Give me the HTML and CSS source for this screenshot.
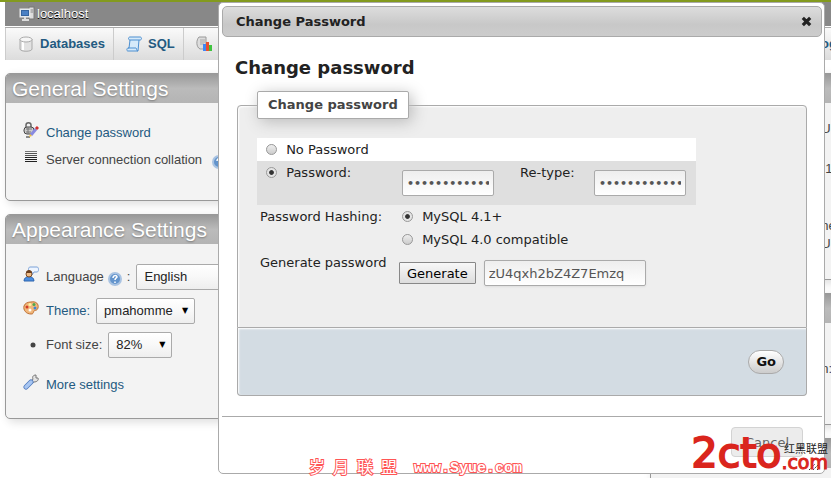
FILE: index.html
```html
<!DOCTYPE html>
<html lang="en">
<head>
    <meta charset="UTF-8">
    <title>localhost | phpMyAdmin</title>
    <link rel="stylesheet" href="styles.css">
</head>
<body>

    <div class="page">
        <header class="serverinfo">
            <svg class="icon" viewBox="0 0 16 16">
                <rect x="10" y="1" width="5" height="12" fill="#ddd" stroke="#777"/>
                <path d="M11 4h3M11 6h3" stroke="#888"/>
                <rect x="1" y="3" width="10" height="8" fill="#dce6f2" stroke="#e8e8e8"/>
                <rect x="2.500" y="4.500" width="7" height="5" fill="#4a80c4" stroke="#35649f"/>
                <path d="M6 11v2M3 14h7" stroke="#ddd" stroke-width="2"/>
            </svg>
            <a href="#">localhost</a>
        </header>

        <nav class="tabs">
            <a href="#" class="tab">
                <svg class="icon" viewBox="0 0 16 16">
                    <path d="M2 3v10c0 3 12 3 12 0V3" fill="#e2e2e2" stroke="#aaa"/>
                    <path d="M5 5v9" stroke="#fff" stroke-width="2"/>
                    <ellipse cx="8" cy="3.500" rx="6" ry="2.500" fill="#f6f6f6" stroke="#aaa"/>
                </svg>
                Databases
            </a>
            <a href="#" class="tab">
                <svg class="icon" viewBox="0 0 16 16">
                    <path d="M4 1h10c2 0 2 3 0 3h-1l-1 11H2c-2 0-1-3 0-3h1L4 4C2 4 2 1 4 1z" fill="#d6eafa" stroke="#4d8fd0"/>
                    <path d="M4 4h9M2 12h8c1 0 0 3 2 3" fill="none" stroke="#4d8fd0"/>
                </svg>
                SQL
            </a>
            <a href="#" class="tab">
                <svg class="icon" viewBox="0 0 16 16">
                    <path d="M3 1h7v12H4c-4-2-4-9-1-12z" fill="#ddd" stroke="#999"/>
                    <path d="M4 4h5M4 6h5M4 8h4" stroke="#aaa"/>
                    <path d="M7 8h3v7H7z" fill="#3f87f5"/>
                    <path d="M10 6h3v9h-3z" fill="#e8502f"/>
                    <path d="M13 9h3v6h-3z" fill="#3fc43f"/>
                </svg>
            </a>
            <a href="#" class="tab tab-last">og</a>
        </nav>

        <main class="columns">
            <div class="column">
                <section class="group">
                    <h2>General Settings</h2>
                    <ul class="general">
                        <li>
                            <svg class="icon" viewBox="0 0 16 16">
                                <path d="M3 5V3c0-3 5-3 5 0v2" fill="none" stroke="#666" stroke-width="1.500"/>
                                <rect x="1" y="5" width="10" height="7" rx="3" fill="#ccc" stroke="#444"/>
                                <path d="M3 7h6M3 10h5M5 5v7" stroke="#777"/>
                                <path d="M3 15h4" stroke="#222"/>
                                <path d="M8 13l5-6" stroke="#8a8be0" stroke-width="3"/>
                                <path d="M13 7l2-2" stroke="#d03030" stroke-width="3"/>
                                <path d="M6 15l1-3 2 2z" fill="#efc040"/>
                            </svg>
                            <a href="#">Change password</a>
                        </li>
                        <li>
                            <svg class="icon" viewBox="0 0 16 16">
                                <path d="M2 2.500h12" stroke="#777"/>
                                <path d="M2 4.500h12M2 6.500h12" stroke="#555"/>
                                <path d="M2 8.500h12M2 10.500h12M2 12.500h12" stroke="#222"/>
                            </svg>
                            Server connection collation
                            <svg class="icon help help-far" viewBox="0 0 16 16">
                                <circle cx="8" cy="8" r="6" fill="#6394cc" stroke="#a9c3e2" stroke-width="2"/>
                                <path d="M6 7c0-3 4-3 4-1 0 1-2 1-2 3M8 10.500v1.500" fill="none" stroke="#fff" stroke-width="1.500"/>
                            </svg>
                        </li>
                    </ul>
                </section>

                <section class="group">
                    <h2>Appearance Settings</h2>
                    <ul class="appearance">
                        <li>
                            <svg class="icon" viewBox="0 0 16 16">
                                <path d="M7 1h7c2 0 2 5 0 5h-3L9 9l0-3H7C5 6 5 1 7 1z" fill="#eef5ff" stroke="#7ba2d8"/>
                                <path d="M1 15c0-6 10-6 10 0z" fill="#4c8ee0" stroke="#2d65ae"/>
                                <circle cx="6" cy="8" r="3" fill="#f0bd88" stroke="#7a4a25"/>
                                <path d="M3 7c0-4 6-4 6 0z" fill="#6b3f1e"/>
                            </svg>
                            <label for="lang">Language</label>
                            <svg class="icon help" viewBox="0 0 16 16">
                                <circle cx="8" cy="8" r="6" fill="#6394cc" stroke="#a9c3e2" stroke-width="2"/>
                                <path d="M6 7c0-3 4-3 4-1 0 1-2 1-2 3M8 10.500v1.500" fill="none" stroke="#fff" stroke-width="1.500"/>
                            </svg>
                            <span class="colon">:</span>
                            <span class="select select-lang">
                                <select id="lang"><option>English</option></select>
                            </span>
                        </li>
                        <li>
                            <svg class="icon" viewBox="0 0 16 16">
                                <path d="M8 2c5-1 8 2 7 6-1 3-3 2-4 3s0 3-3 3C3 14 0 10 1 6c1-3 4-4 7-4z" fill="#f1b77b" stroke="#bd6f34"/>
                                <circle cx="4" cy="7" r="1.500" fill="#d23c28"/>
                                <circle cx="7" cy="4.500" r="1.500" fill="#fff3a0"/>
                                <circle cx="11" cy="4.500" r="1.500" fill="#4ea84e"/>
                                <circle cx="12" cy="8" r="1.500" fill="#3f87d5"/>
                                <circle cx="7" cy="10" r="1.500" fill="#fff"/>
                            </svg>
                            <label for="theme"><a href="#">Theme:</a></label>
                            <span class="select select-theme">
                                <select id="theme"><option>pmahomme</option></select>
                            </span>
                        </li>
                        <li>
                            <svg class="icon" viewBox="0 0 16 16">
                                <circle cx="10" cy="11" r="2.500" fill="#444"/>
                            </svg>
                            <label for="fontsize">Font size:</label>
                            <span class="select select-size">
                                <select id="fontsize"><option>82%</option></select>
                            </span>
                        </li>
                        <li class="more">
                            <svg class="icon" viewBox="0 0 16 16">
                                <path d="M8 8l2-3c-1-2 0-4 3-4v3h2c1 2-1 4-4 4L9 9z" fill="#e4e4e4" stroke="#777"/>
                                <path d="M3 13l5-5" stroke="#4f79bd" stroke-width="5" stroke-linecap="round"/>
                                <path d="M3 13l5-5" stroke="#a8c6f2" stroke-width="3.500" stroke-linecap="round"/>
                            </svg>
                            <a href="#">More settings</a>
                        </li>
                    </ul>
                </section>
            </div>

            <div class="column column-right">
                <section class="group">
                    <h2></h2>
                    <ul class="server">
                        <li>UN</li>
                        <li class="version">1</li>
                        <li class="charset">ne</li>
                        <li>U</li>
                    </ul>
                </section>
                <section class="group">
                    <h2></h2>
                    <ul class="web">
                        <li>n:</li>
                    </ul>
                </section>
                <section class="group">
                    <h2></h2>
                    <ul class="web"></ul>
                </section>
            </div>
        </main>
    </div>

    <div class="dialog" role="dialog" aria-labelledby="dialog-title">
        <div class="titlebar">
            <span id="dialog-title">Change Password</span>
            <button type="button" class="close" aria-label="close">
                <svg viewBox="0 0 12 12"><path d="M2 2l8 8M10 2l-8 8" stroke="#222" stroke-width="3.500"/></svg>
            </button>
        </div>

        <form class="content">
            <h1>Change password</h1>
            <fieldset class="fields">
                <legend>Change password</legend>
                <table>
                    <colgroup>
                        <col class="col-name">
                        <col class="col-pass">
                        <col class="col-retype">
                        <col>
                    </colgroup>
                    <tr class="odd">
                        <td colspan="4">
                            <input type="radio" name="nopass" id="nopass1">
                            <label for="nopass1">No Password</label>
                        </td>
                    </tr>
                    <tr class="even">
                        <td>
                            <input type="radio" name="nopass" id="nopass0" checked>
                            <label for="nopass0">Password:</label>
                        </td>
                        <td class="pass"><input type="password" aria-label="Password" value="zU4qxh2bZ4Z7Emzq"></td>
                        <td class="retype"><label for="retype">Re-type:</label></td>
                        <td class="pass"><input type="password" id="retype" value="zU4qxh2bZ4Z7Emzq"></td>
                    </tr>
                    <tr>
                        <td class="label">Password Hashing:</td>
                        <td class="hash" colspan="3">
                            <input type="radio" name="hash" id="hash41" checked>
                            <label for="hash41">MySQL 4.1+</label>
                        </td>
                    </tr>
                    <tr>
                        <td></td>
                        <td class="hash" colspan="3">
                            <input type="radio" name="hash" id="hash40">
                            <label for="hash40">MySQL 4.0 compatible</label>
                        </td>
                    </tr>
                    <tr>
                        <td class="label"><label for="generated">Generate password</label></td>
                        <td class="generate" colspan="3">
                            <div class="generate-row">
                                <button type="button">Generate</button>
                                <input type="text" id="generated" value="zU4qxh2bZ4Z7Emzq">
                            </div>
                        </td>
                    </tr>
                </table>
            </fieldset>
            <div class="submit"><button type="submit">Go</button></div>
        </form>

        <div class="buttonpane"><button type="button">Cancel</button></div>
        <svg class="grip" viewBox="0 0 12 8"><path d="M1 7l6-6M5 7l6-6M9 7l3-3" stroke="#333" stroke-dasharray="2 1"/></svg>
    </div>

    <div class="mark mark-syue"><span class="cjk">岁月联盟</span><span>www.Syue.com</span></div>
    <div class="mark mark-cto">
        <span class="big">2cto</span>
        <span class="side"><span class="union">红黑联盟</span><span class="com">.com</span></span>
    </div>

</body>
</html>
```
FILE: styles.css
```css
* {
    box-sizing: border-box;
}

body {
    margin: 0;
    background: #fff;
    color: #444;
    font: 13px/16px "Liberation Sans", Arial, sans-serif;
    overflow: hidden;
}

a {
    color: #235a81;
    text-decoration: none;
}

ul {
    list-style: none;
    margin: 0;
}

.icon {
    width: 16px;
    height: 16px;
    flex: none;
}

.page {
    border-top: 2px solid #839a1e;
    padding-left: 5px;
    height: 100vh;
    overflow: hidden;
}

.serverinfo {
    display: flex;
    align-items: center;
    gap: 2px;
    height: 24px;
    padding-left: 14px;
    background: #888;
}

.serverinfo a {
    color: #fff;
    text-shadow: 0 1px 0 #000;
}

.tabs {
    display: flex;
    height: 33px;
    margin-top: 1px;
    border-top: 1px solid #aaa;
    background: linear-gradient(#fafafa, #dcdcdc);
}

.tab {
    display: flex;
    align-items: center;
    gap: 6px;
    padding: 0 8px 0 12px;
    border-left: 1px solid #ccc;
    font-weight: bold;
}

.tab-last {
    margin: 0 -6px 0 auto;
    padding: 0;
    border: 0;
}

.columns {
    display: grid;
    grid-template-columns: 78% 1fr;
    gap: 1px;
    margin-top: 13px;
}

.column .group {
    margin-bottom: 13px;
}

.column:first-child {
    margin-right: 10px;
}

.column-right {
    margin-right: -100px;
    white-space: nowrap;
}

.group {
    background: #f3f3f3;
    border: 1px solid #999;
    border-radius: 5px;
    box-shadow: 3px 3px 10px #ddd;
    overflow: hidden;
}

.group h2 {
    height: 29px;
    margin: 0;
    padding-left: 6px;
    background: linear-gradient(#999, #bbb 50%, #b4b4b4);
    color: #fff;
    font-size: 21px;
    font-weight: normal;
    line-height: 29px;
    text-shadow: 0 1px 2px #777;
}

.group ul {
    padding: 20px 17px;
}

.group li {
    display: flex;
    align-items: center;
    height: 26px;
    margin-bottom: 8px;
}

.group li > .icon:first-child {
    margin: 0 7px 6px 0;
}

.group .general {
    padding: 17px 17px 26px;
}

.group .general li {
    margin-bottom: 1px;
}

.group .help {
    margin: 3px 4px 0 3px;
}

.group .help-far {
    margin-left: 9px;
}

.group .more {
    margin: 14px 0 0;
}

.colon {
    margin-right: 6px;
}

.group .server {
    padding: 17px 0 26px 170px;
}

.group .server li {
    height: 18px;
    margin: 0;
}

.group .server .version {
    margin-top: 22px;
    padding-left: 4px;
}

.group .server .charset {
    margin-top: 39px;
}

.group .web {
    min-height: 101px;
    padding: 33px 0 0 170px;
}

.select {
    display: inline-grid;
    align-items: center;
    height: 26px;
    margin-left: 6px;
    border: 1px solid #aaa;
    border-radius: 2px;
    background: linear-gradient(#fff, #f8f8f8 50%, #eee);
    color: #000;
}

.select select,
.select::after {
    grid-area: 1 / 1;
}

.select::after {
    content: "▼";
    justify-self: end;
    margin-right: 6px;
    font: 8px/12px "DejaVu Sans", sans-serif;
    pointer-events: none;
}

.select select {
    width: 100%;
    padding: 0 7px;
    border: 0;
    background: none;
    color: #222;
    font: inherit;
    font-size: 13px;
    appearance: none;
}

.select-lang {
    width: 140px;
    margin-left: 0;
}

.select-theme {
    width: 99px;
}

.select-size {
    width: 64px;
}

/* dialog */

.dialog {
    position: absolute;
    top: 2px;
    left: 218px;
    right: 6px;
    padding: 3px 2px 3px 3px;
    background: #fff;
    border: 1px solid #aaa;
    border-radius: 5px;
    color: #222;
    font: 13px/17px "DejaVu Sans", Verdana, sans-serif;
}

.titlebar {
    display: flex;
    align-items: center;
    justify-content: space-between;
    height: 31px;
    padding: 0 9px 0 13px;
    border: 1px solid #aaa;
    border-radius: 5px;
    background: linear-gradient(#ddd, #c8c8c8 60%, #ccc);
    font-weight: bold;
}

.close {
    display: flex;
    padding: 0;
    border: 0;
    background: none;
}

.close svg {
    width: 11px;
    height: 11px;
}

.content {
    padding: 21px 15px 20px 13px;
}

h1 {
    margin: 0 0 13px;
    font-size: 18px;
    line-height: 20px;
}

.fields {
    min-width: 0;
    margin: 0 0 0 2px;
    padding: 19px 19px 38px;
    background: #eee;
    border: 1px solid #aaa;
    border-radius: 4px 4px 0 0;
    box-shadow: 1px 1px 2px #fff inset;
}

legend {
    height: 28px;
    padding: 0 10px;
    background: #fff;
    border: 1px solid #aaa;
    border-radius: 2px;
    box-shadow: 3px 3px 15px #bbb;
    color: #444;
    font-weight: bold;
    line-height: 26px;
}

table {
    width: 439px;
    table-layout: fixed;
    border-collapse: collapse;
}

.col-name {
    width: 142px;
}

.col-pass {
    width: 98px;
}

.col-retype {
    width: 94px;
}

td {
    height: 23px;
    padding: 3px;
    vertical-align: top;
    white-space: nowrap;
}

.odd {
    background: #fff;
}

.even {
    background: #dfdfdf;
}

input[type="radio"] {
    width: 11px;
    height: 11px;
    margin: 0 5px 0 6px;
    vertical-align: -1px;
    border: 1px solid #999;
    border-radius: 50%;
    background: linear-gradient(#eee, #ccc);
    appearance: none;
}

input[type="radio"]:checked {
    background: radial-gradient(#333 30%, #e4e4e4 45%);
}

.hash input[type="radio"] {
    margin-left: 0;
}

.pass {
    height: 44px;
    padding-top: 9px;
}

.retype {
    padding-left: 23px;
}

input[type="text"],
input[type="password"] {
    display: block;
    width: 92px;
    height: 26px;
    padding: 0 4px;
    border: 1px solid #aaa;
    border-radius: 2px;
    background: linear-gradient(#eee, #fff);
    box-shadow: 0 1px 2px #ddd;
    color: #555;
    font: 13px "DejaVu Sans", Verdana, sans-serif;
}

input[type="password"] {
    font-size: 11px;
    font-weight: bold;
}

.generate {
    padding: 9px 0 3px;
}

.generate-row {
    display: flex;
    align-items: center;
    gap: 8px;
}

.generate input[type="text"] {
    width: 162px;
}

.generate button {
    height: 22px;
    padding: 0 7px;
    border: 1px solid #888;
    border-radius: 1px;
    background: linear-gradient(#f8f8f8, #ddd);
    color: #000;
    font: 13px "DejaVu Sans", Verdana, sans-serif;
}

.submit {
    display: flex;
    align-items: center;
    justify-content: flex-end;
    height: 68px;
    margin-left: 2px;
    padding-right: 22px;
    background: #d3dce3;
    border: 1px solid #aaa;
    border-top: 0;
    border-radius: 0 0 4px 4px;
    box-shadow: 1px 1px 2px #fff inset;
}

.submit button {
    height: 24px;
    padding: 0 7px;
    border: 1px solid #aaa;
    border-radius: 12px;
    background: linear-gradient(#fff, #ccc);
    color: #111;
    font: bold 13px "DejaVu Sans", Verdana, sans-serif;
}

.buttonpane {
    display: flex;
    justify-content: flex-end;
    height: 54px;
    padding: 10px 19px;
    border-top: 1px solid #aaa;
}

.buttonpane button {
    width: 72px;
    height: 30px;
    padding: 0;
    border: 1px solid #d3d3d3;
    border-radius: 4px;
    background: #ececec;
    color: #666;
    font: 13px "DejaVu Sans", Verdana, sans-serif;
}

.grip {
    position: absolute;
    right: 4px;
    bottom: 2px;
    width: 12px;
    height: 8px;
}

/* watermarks */

.mark {
    position: absolute;
    display: flex;
    white-space: nowrap;
}

.mark-syue {
    left: 309px;
    bottom: 1px;
    gap: 9px;
    color: #fff;
    font: bold 15px/16px "Liberation Mono", "Noto Sans CJK SC", monospace;
    -webkit-text-stroke: 2px #f55;
    paint-order: stroke fill;
}

.mark-syue .cjk {
    font-size: 16px;
    font-weight: normal;
    letter-spacing: 8px;
}

.mark-cto {
    right: 3px;
    bottom: 8px;
    align-items: flex-end;
    color: #da251d;
    font-family: "DejaVu Sans", Verdana, sans-serif;
}

.mark-cto .big {
    font-size: 41px;
    line-height: 34px;
    -webkit-text-stroke: 2px #da251d;
}

.side {
    display: flex;
    flex-direction: column;
    align-items: flex-end;
}

.union {
    color: #222;
    font: 11px/12px "Noto Sans CJK SC", sans-serif;
}

.com {
    font-size: 19px;
    line-height: 16px;
    -webkit-text-stroke: 1px #da251d;
}
```
